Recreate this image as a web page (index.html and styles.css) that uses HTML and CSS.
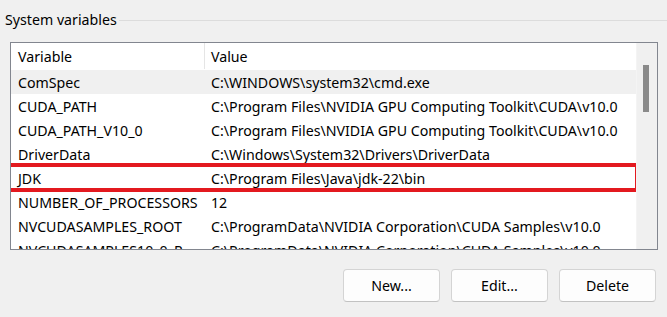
FILE: index.html
```html
<!DOCTYPE html>
<html>
<head>
<meta charset="utf-8">
<link rel="stylesheet" href="styles.css">
</head>
<body>
<div class="page">
  <div class="group-title">
    <span class="title-text">System variables</span>
    <span class="title-line"></span>
  </div>
  <div class="list">
    <div class="list-body">
      <div class="header">
        <div class="cell col1 head">Variable</div>
        <div class="cell col2">Value</div>
      </div>
      <div class="row hover"><div class="cell col1">ComSpec</div><div class="cell col2">C:\WINDOWS\system32\cmd.exe</div></div>
      <div class="row"><div class="cell col1">CUDA_PATH</div><div class="cell col2">C:\Program Files\NVIDIA GPU Computing Toolkit\CUDA\v10.0</div></div>
      <div class="row"><div class="cell col1">CUDA_PATH_V10_0</div><div class="cell col2">C:\Program Files\NVIDIA GPU Computing Toolkit\CUDA\v10.0</div></div>
      <div class="row"><div class="cell col1">DriverData</div><div class="cell col2">C:\Windows\System32\Drivers\DriverData</div></div>
      <div class="row"><div class="cell col1">JDK</div><div class="cell col2">C:\Program Files\Java\jdk-22\bin</div></div>
      <div class="row"><div class="cell col1">NUMBER_OF_PROCESSORS</div><div class="cell col2">12</div></div>
      <div class="row"><div class="cell col1">NVCUDASAMPLES_ROOT</div><div class="cell col2">C:\ProgramData\NVIDIA Corporation\CUDA Samples\v10.0</div></div>
      <div class="row"><div class="cell col1">NVCUDASAMPLES10_0_ROOT</div><div class="cell col2">C:\ProgramData\NVIDIA Corporation\CUDA Samples\v10.0</div></div>
      <div class="highlight"></div>
    </div>
    <div class="scrollbar"><div class="thumb"></div></div>
  </div>
  <div class="buttons">
    <button class="btn">New...</button>
    <button class="btn">Edit...</button>
    <button class="btn">Delete</button>
  </div>
</div>
</body>
</html>
```
FILE: styles.css
```css
html, body {
  margin: 0;
  padding: 0;
  background: #f0f0f0;
}
body {
  width: 667px;
  height: 317px;
  overflow: hidden;
  font-family: "Noto Sans", "Open Sans", sans-serif;
  font-size: 14.2px;
  color: #000;
}
.page {
  display: flex;
  flex-direction: column;
}
.group-title {
  display: flex;
  align-items: center;
  height: 22px;
  margin-top: 9px;
}
.title-text {
  padding-left: 5px;
  padding-right: 2px;
  line-height: 22px;
}
.title-line {
  flex: 1;
  height: 1px;
  background: #dcdcdc;
}
.list {
  margin-top: 11px;
  margin-left: 10px;
  width: 648px;
  height: 208px;
  box-sizing: border-box;
  border: 1px solid #82868f;
  background: #fff;
  display: flex;
  overflow: hidden;
}
.list-body {
  position: relative;
  width: 625px;
  flex: none;
}
.header, .row {
  display: flex;
  white-space: nowrap;
}
.header {
  height: 27px;
  line-height: 26px;
}
.header .cell {
  padding-top: 1px;
  line-height: 25px;
}
.header .col1 {
  border-right: 1px solid #e5e5e5;
  height: 26px;
}
.row {
  height: 24px;
}
.row .cell {
  padding-top: 1px;
  line-height: 23px;
}
.row.hover {
  background: #f0f0f0;
}
.cell {
  box-sizing: border-box;
  overflow: hidden;
  white-space: nowrap;
  text-overflow: ellipsis;
}
.col1 {
  width: 194px;
  padding-left: 7px;
  padding-right: 6px;
  flex: none;
}
.col2 {
  padding-left: 6px;
  flex: 1;
  min-width: 0;
}
.highlight {
  position: absolute;
  left: -4px;
  top: 120px;
  width: 632px;
  height: 29px;
  box-sizing: border-box;
  border: 4px solid #e3191f;
}
.scrollbar {
  flex: 1;
  background: #f0f0f0;
  position: relative;
  border-left: 1px solid #f4f4f4;
}
.thumb {
  position: absolute;
  left: 6px;
  top: 22px;
  width: 6px;
  height: 47px;
  background: #8a8a8a;
}
.buttons {
  display: flex;
  justify-content: flex-end;
  gap: 11px;
  padding-right: 11px;
  margin-top: 19px;
}
.btn {
  width: 97px;
  height: 33px;
  box-sizing: border-box;
  background: #fdfdfd;
  border: 1px solid #d4d4d4;
  border-bottom-color: #c2c2c2;
  border-radius: 4px;
  font-family: inherit;
  font-size: 14.2px;
  color: #000;
  padding: 0;
}
```
